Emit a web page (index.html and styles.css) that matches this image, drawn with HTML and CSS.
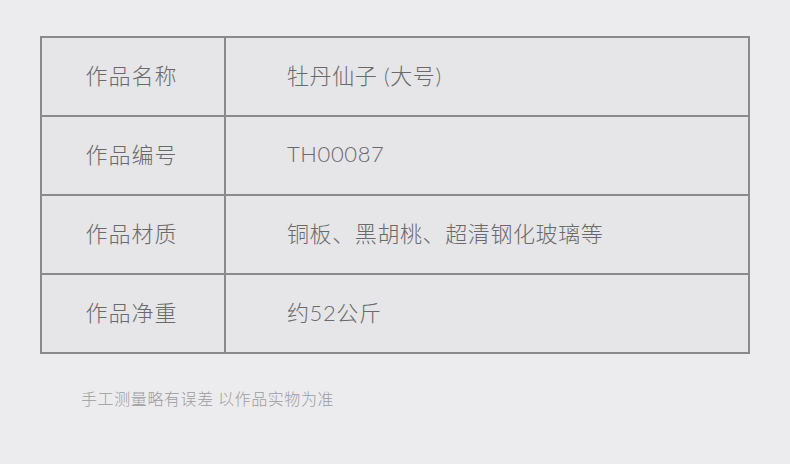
FILE: index.html
```html
<!DOCTYPE html>
<html lang="zh-CN">
<head>
<meta charset="utf-8">
<link rel="stylesheet" href="styles.css">
</head>
<body>
<div class="page">
  <div class="spec">
    <div class="row"><div class="label">作品名称</div><div class="value">牡丹仙子 (大号)</div></div>
    <div class="row"><div class="label">作品编号</div><div class="value">TH00087</div></div>
    <div class="row"><div class="label">作品材质</div><div class="value">铜板、黑胡桃、超清钢化玻璃等</div></div>
    <div class="row"><div class="label">作品净重</div><div class="value">约52公斤</div></div>
  </div>
  <p class="note">手工测量略有误差 以作品实物为准</p>
</div>
</body>
</html>
```

FILE: styles.css
```css
html, body {
  margin: 0;
  padding: 0;
  background: #ececee;
}
body {
  font-family: "Noto Sans CJK SC", "Noto Sans", sans-serif;
  font-weight: 300;
}
.page {
  padding: 36px 40px 0 40px;
  width: 710px;
}
.spec {
  border: 2px solid #8a8a8c;
  border-bottom: none;
  background: #e6e6e8;
}
.row {
  display: grid;
  grid-template-columns: 182px 1fr;
  height: 77px;
  border-bottom: 2px solid #8a8a8c;
}
.label {
  display: flex;
  align-items: center;
  justify-content: center;
  font-size: 22px;
  color: #6a6a6c;
  letter-spacing: 1px;
  padding: 0 3px 5px 0;
}
.value {
  display: flex;
  align-items: center;
  padding: 0 0 5px 61px;
  font-family: "Lato", "Noto Sans CJK SC", sans-serif;
  font-size: 22px;
  letter-spacing: 0.6px;
  color: #6a6a6c;
  border-left: 2px solid #8a8a8c;
}
.note {
  margin: 32px 0 0 41px;
  font-size: 16px;
  letter-spacing: 0.6px;
  color: #9c9c9e;
}
```
